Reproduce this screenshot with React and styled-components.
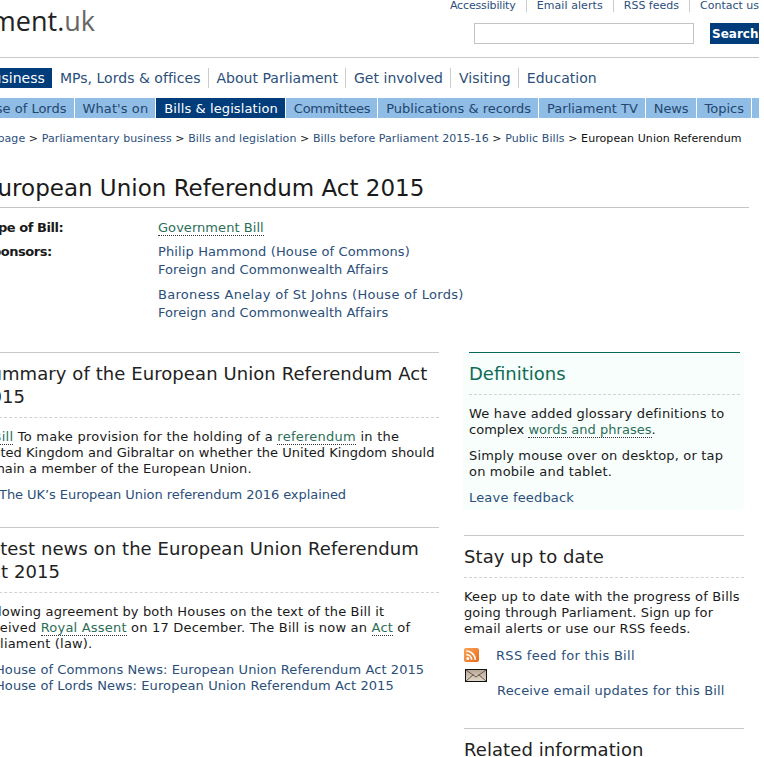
import React from "react";
import styled, { createGlobalStyle } from "styled-components";

const Global = createGlobalStyle`
  html, body { margin: 0; padding: 0; background: #fff; }
  body { font-family: "DejaVu Sans", Verdana, sans-serif; font-size: 13px; line-height: 16px; color: #1a1a1a; letter-spacing: .18px; }
  a { color: #2b4f7a; text-decoration: none; }
`;
const Clip = styled.div`width: 759px; height: 757px; overflow: hidden;`;
const Page = styled.div`width: 776px; margin-left: -17px;`;
const Header = styled.header`
  height: 57px; border-bottom: 1px solid #c9c9c9; display: flex; justify-content: space-between;
`;
const Logo = styled.div`
  font-family: "Open Sans", sans-serif; font-size: 27px; line-height: 40px; padding-top: 1px; color: #222; letter-spacing: 0; margin-left: -130px; width: 242px; text-align: right; white-space: nowrap;
  span { color: #666; }
`;
const HeaderRight = styled.div`display: flex; flex-direction: column; align-items: flex-end; width: 320px;`;
const TopLinks = styled.ul`list-style: none; margin: -1px 0 0; padding: 0; display: flex; font-size: 11px; line-height: 13px; height: 13px; letter-spacing: 0;`;
const TopLink = styled.li`
  padding: 0 10px; border-left: 1px solid #ccc; white-space: nowrap; letter-spacing: ${p => p.$track || 0}px;
  &:first-child { border: 0; }
  &:last-child { padding-right: 0; }
`;
const SearchRow = styled.form`display: flex; gap: 16px; margin-top: 11px; align-items: center;`;
const SearchInput = styled.div`width: 218px; height: 19px; border: 1px solid #c4c4c4; background: #fff;`;
const SearchBtn = styled.div`width: 49px; height: 21px; background: #003d7a; color: #fff; font-weight: bold; font-size: 12px; letter-spacing: 0; line-height: 22px; padding-left: 2px; box-sizing: border-box; white-space: nowrap; overflow: hidden;`;
const MainNav = styled.nav`display: flex; margin-top: 10px; height: 20px; align-items: stretch; margin-left: -110px; font-size: 14px; line-height: 20px; letter-spacing: .03px;`;
const MainItem = styled.a`
  padding: 0 7px 0 8px; white-space: nowrap; color: ${p => p.$on ? "#fff" : "#2b4f7a"}; background: ${p => p.$on ? "#003d7a" : "transparent"};
  border-left: ${p => p.$sep ? "1px solid #ccc" : "0"};
`;
const SubNav = styled.nav`display: flex; margin-top: 10px; height: 20px; width: 1000px; margin-left: -164px; background: #8fbde6; font-size: 13px; line-height: 21px; letter-spacing: 0;`;
const SubItem = styled.a`
  padding: 0 7px 0 8px; white-space: nowrap; color: ${p => p.$on ? "#fff" : "#24466e"}; background: ${p => p.$on ? "#003d7a" : "transparent"};
  border-right: 1px solid #fff; letter-spacing: ${p => p.$track || 0}px;
`;
const Crumbs = styled.div`margin: 13px 0 0 -84px; font-size: 11px; line-height: 16px; white-space: nowrap; letter-spacing: .08px;`;
const CrumbIn = styled.span`color: #111;`;
const Title = styled.h1`margin: 25px 0 0; padding-bottom: 3px; font-weight: 400; font-size: 23px; letter-spacing: 0; line-height: 32px; color: #1a1a1a; border-bottom: 1px solid #c4c4c4; width: 766px;`;
const Facts = styled.dl`margin: 11px 0 0; display: grid; grid-template-columns: 175px 1fr; row-gap: 6px;`;
const Term = styled.dt`font-weight: bold; font-size: 13px; line-height: 18px; letter-spacing: -.45px;`;
const Def = styled.dd`margin: 0; line-height: 18px; font-size: 13px; letter-spacing: .05px;`;
const DefLink = styled.a`display: block; letter-spacing: ${p => p.$track}px;`;
const Gap = styled.div`height: 7px;`;
const Gloss = styled.a`color: #2c6e58; border-bottom: 1px dotted #333;`;
const Columns = styled.div`display: flex; margin-top: 30px; gap: 25px;`;
const Left = styled.div`width: 460px; flex: none; margin-left: -4px;`;
const Right = styled.div`width: 280px; flex: none;`;
const Section = styled.section`
  border-top: 1px solid #c9c9c9; padding-bottom: ${p => p.$pb || 0}px;
`;
const H2 = styled.h2`
  margin: 0; font-weight: 400; font-size: 18px; letter-spacing: .08px; line-height: 23px; padding: 9px 0; border-bottom: 1px dashed #d2d2d2; color: #222; white-space: nowrap;
`;
const P = styled.p`margin: 11px 0 -1px; line-height: 16px; white-space: nowrap; padding-left: ${p => p.$in || 0}px;`;
const Line = styled.span`display: block; letter-spacing: ${p => p.$track}px;`;
const LinkList = styled.div`margin-top: 11px; padding-left: 16px; letter-spacing: .09px; a { display: block; line-height: 16px; white-space: nowrap; }`;
const Defs = styled.div`
  background: #f7fefc; padding: 0 4px 5px 6px; margin: 0 0 25px -1px;
`;
const DefHead = styled.h2`
  margin: 0; font-weight: 400; font-size: 18px; letter-spacing: 0; line-height: 23px; padding: 9px 0; color: #0f6b55; border-top: 1px solid #0a6a55; border-bottom: 1px dashed #d2d2d2;
`;
const IconRow = styled.div`display: flex; align-items: flex-start; margin-top: ${p => p.$mt || 0}px; letter-spacing: ${p => p.$track ?? .18}px;`;
const IconSlot = styled.div`width: ${p => p.$w}px; flex: none; padding-left: ${p => p.$left || 0}px; box-sizing: border-box;`;
const MailLink = styled.a`margin-top: 14px;`;
const Rss = () => (
  <svg width="15" height="14" viewBox="0 0 15 14" style={{display: "block"}}>
    <defs>
      <linearGradient id="rssFill" x1="0" y1="0" x2="1" y2="1">
        <stop offset="0" stopColor="#f9a557" />
        <stop offset="1" stopColor="#e9691c" />
      </linearGradient>
    </defs>
    <rect width="15" height="14" rx="2" fill="url(#rssFill)" />
    <circle cx="3.8" cy="10.6" r="1.5" fill="#fff" />
    <path d="M2.3 6.6a5.4 5.4 0 0 1 5.4 5.2M2.3 3a9 9 0 0 1 9 8.8" stroke="#fff" strokeWidth="1.7" fill="none" />
  </svg>
);
const Mail = () => (
  <svg width="22" height="13" viewBox="0 0 22 13" style={{display: "block"}}>
    <defs>
      <linearGradient id="mailFill" x1="0" y1="0" x2="0" y2="1">
        <stop offset="0" stopColor="#b7a594" />
        <stop offset="1" stopColor="#e2d8cc" />
      </linearGradient>
    </defs>
    <rect x=".5" y=".5" width="21" height="12" fill="url(#mailFill)" stroke="#111" />
    <path d="M1 1l10 7 10-7M1 12l7.5-6.5M21 12l-7.5-6.5" stroke="#6b5a4c" fill="none" />
  </svg>
);

const topLinks = [["Accessibility", -.15], ["Email alerts", .08], ["RSS feeds", 0], ["Contact us", 0]];

export default function App() {
  return (
    <Clip>
      <Global />
      <Page>
        <Header>
          <Logo>parliament.<span>uk</span></Logo>
          <HeaderRight>
            <TopLinks>
              {topLinks.map(([t, k]) => <TopLink key={t} $track={k}><a href="#">{t}</a></TopLink>)}
            </TopLinks>
            <SearchRow>
              <SearchInput />
              <SearchBtn>Search</SearchBtn>
            </SearchRow>
          </HeaderRight>
        </Header>
        <MainNav>
          <MainItem $on href="#">Parliamentary business</MainItem>
          <MainItem href="#">MPs, Lords &amp; offices</MainItem>
          <MainItem $sep href="#">About Parliament</MainItem>
          <MainItem $sep href="#">Get involved</MainItem>
          <MainItem $sep href="#">Visiting</MainItem>
          <MainItem $sep href="#">Education</MainItem>
        </MainNav>
        <SubNav>
          <SubItem href="#">House of Commons</SubItem>
          <SubItem href="#">House of Lords</SubItem>
          <SubItem href="#" $track={.1}>What's on</SubItem>
          <SubItem $on href="#" $track={.1}>Bills &amp; legislation</SubItem>
          <SubItem href="#" $track={-.25}>Committees</SubItem>
          <SubItem href="#">Publications &amp; records</SubItem>
          <SubItem href="#">Parliament TV</SubItem>
          <SubItem href="#" $track={-.1}>News</SubItem>
          <SubItem href="#">Topics</SubItem>
          <SubItem href="#">Parliament</SubItem>
        </SubNav>
        <Crumbs>
          <a href="#">Parliament home page</a> &gt; <a href="#">Parliamentary business</a> &gt; <a href="#">Bills and legislation</a> &gt; <a href="#">Bills before Parliament 2015-16</a> &gt; <a href="#">Public Bills</a> &gt; <CrumbIn>European Union Referendum</CrumbIn>
        </Crumbs>
        <Title>European Union Referendum Act 2015</Title>
        <Facts>
          <Term>Type of Bill:</Term>
          <Def><Gloss href="#">Government Bill</Gloss></Def>
          <Term>Sponsors:</Term>
          <Def>
            <DefLink href="#" $track={.12}>Philip Hammond (House of Commons)</DefLink>
            <DefLink href="#" $track={.06}>Foreign and Commonwealth Affairs</DefLink>
            <Gap />
            <DefLink href="#" $track={.3}>Baroness Anelay of St Johns (House of Lords)</DefLink>
            <DefLink href="#" $track={.06}>Foreign and Commonwealth Affairs</DefLink>
          </Def>
        </Facts>
        <Columns>
          <Left>
            <Section $pb={25}>
              <H2>Summary of the European Union Referendum Act<br />2015</H2>
              <P>
                <Line $track={.26}>A <Gloss href="#">Bill</Gloss> To make provision for the holding of a <Gloss href="#">referendum</Gloss> in the</Line>
                <Line $track={.03}>United Kingdom and Gibraltar on whether the United Kingdom should</Line>
                <Line $track={.05}>remain a member of the European Union.</Line>
              </P>
              <P $in={20}><Line $track={-.06}><a href="#">The UK’s European Union referendum 2016 explained</a></Line></P>
            </Section>
            <Section>
              <H2>Latest news on the European Union Referendum<br />Act 2015</H2>
              <P>
                <Line $track={.15}>Following agreement by both Houses on the text of the Bill it</Line>
                <Line $track={.2}>received <Gloss href="#">Royal Assent</Gloss> on 17 December. The Bill is now an <Gloss href="#">Act</Gloss> of</Line>
                <Line $track={.18}>Parliament (law).</Line>
              </P>
              <LinkList>
                <a href="#">House of Commons News: European Union Referendum Act 2015</a>
                <a href="#">House of Lords News: European Union Referendum Act 2015</a>
              </LinkList>
            </Section>
          </Left>
          <Right>
            <Defs>
              <DefHead>Definitions</DefHead>
              <P>
                <Line $track={.18}>We have added glossary definitions to</Line>
                <Line $track={.02}>complex <Gloss href="#">words and phrases</Gloss>.</Line>
              </P>
              <P>
                <Line $track={.16}>Simply mouse over on desktop, or tap</Line>
                <Line $track={.18}>on mobile and tablet.</Line>
              </P>
              <P><a href="#">Leave feedback</a></P>
            </Defs>
            <Section $pb={29}>
              <H2>Stay up to date</H2>
              <P>
                <Line $track={.18}>Keep up to date with the progress of Bills</Line>
                <Line $track={.12}>going through Parliament. Sign up for</Line>
                <Line $track={.18}>email alerts or use our RSS feeds.</Line>
              </P>
              <IconRow $mt={12} $track={.3}><IconSlot $w={32}><Rss /></IconSlot><a href="#">RSS feed for this Bill</a></IconRow>
              <IconRow $mt={5}><IconSlot $w={33} $left={1}><Mail /></IconSlot><MailLink href="#">Receive email updates for this Bill</MailLink></IconRow>
            </Section>
            <Section><H2>Related information</H2></Section>
          </Right>
        </Columns>
      </Page>
    </Clip>
  );
}
